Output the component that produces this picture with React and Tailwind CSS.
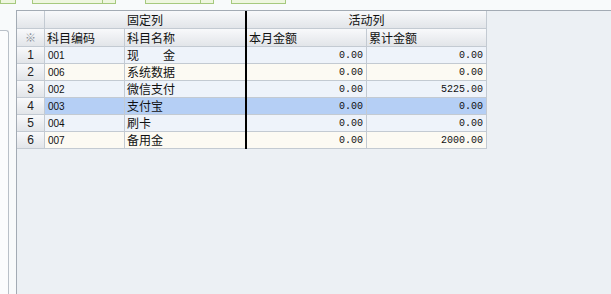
const rows = [
  { no: "1", code: "001", name: "现　　金", month: "0.00", total: "0.00" },
  { no: "2", code: "006", name: "系统数据", month: "0.00", total: "0.00" },
  { no: "3", code: "002", name: "微信支付", month: "0.00", total: "5225.00" },
  { no: "4", code: "003", name: "支付宝", month: "0.00", total: "0.00", selected: true },
  { no: "5", code: "004", name: "刷卡", month: "0.00", total: "0.00" },
  { no: "6", code: "007", name: "备用金", month: "0.00", total: "2000.00" },
];

const cjk = "font-['Noto_Sans_CJK_SC','Noto_Sans',sans-serif]";
const head = "bg-gradient-to-b from-[#f8f9fb] to-[#e2e5e9]";

function ToolButton({ w, split }) {
  return (
    <div className="flex h-[4px]">
      <div
        className="h-full border-b border-l border-r border-[#a6c97e] bg-[#eef6df]"
        style={{ width: w }}
      />
      {split && <div className="h-full w-[13px] border-b border-r border-[#a6c97e] bg-[#eef6df]" />}
    </div>
  );
}

function Row({ r }) {
  const bg = r.selected ? "bg-[#b5cff5]" : r.no % 2 ? "bg-[#eef3fa]" : "bg-[#fcfaf3]";
  return (
    <div className="flex h-[17px]">
      <div className={`w-[28px] shrink-0 border-b border-r border-[#c3cad2] ${head} flex items-center justify-center text-[12px] text-[#222] font-['Liberation_Sans',sans-serif]`}>
        {r.no}
      </div>
      <div className={`w-[80px] shrink-0 border-b border-r border-[#c3cad2] ${bg} flex items-center pl-[3px] text-[10px] text-[#111] font-['Liberation_Sans',sans-serif]`}>
        {r.code}
      </div>
      <div className={`w-[120px] shrink-0 border-b border-[#c3cad2] ${bg} flex items-center pl-[2px] text-[12px] text-[#111] ${cjk} leading-none`}>
        {r.name}
      </div>
      <div className="w-[2px] shrink-0 bg-black" />
      <div className={`w-[120px] shrink-0 border-b border-r border-[#c3cad2] ${bg} flex items-center justify-end pr-[3px] text-[10px] text-[#111] font-['Liberation_Mono',monospace]`}>
        {r.month}
      </div>
      <div className={`w-[120px] shrink-0 border-b border-r border-[#c3cad2] ${bg} flex items-center justify-end pr-[3px] text-[10px] text-[#111] font-['Liberation_Mono',monospace]`}>
        {r.total}
      </div>
    </div>
  );
}

export default function App() {
  return (
    <div className="flex h-[294px] w-[611px] flex-col overflow-hidden bg-[#f8fafb]">
      <div className="flex h-[10px] shrink-0">
        <div className="ml-[0px]"><ToolButton w={16} /></div>
        <div className="ml-[16px]"><ToolButton w={71} split /></div>
        <div className="ml-[29px]"><ToolButton w={56} split /></div>
        <div className="ml-[17px]"><ToolButton w={55} /></div>
      </div>

      <div className="flex flex-1">
        <div className="w-[16px] shrink-0 pt-[20px]">
          <div className="h-full w-[9px] rounded-tr-[3px] border-r border-t border-[#b9c0c8] bg-[#fbfcfd]" />
        </div>

        <div className="flex-1 border-l border-t border-[#a3abb4] bg-[#ecf0f4]">
          <div className={`flex h-[18px] ${cjk} text-[12px] text-[#111]`}>
            <div className={`w-[28px] shrink-0 border-b border-r border-[#c3cad2] ${head}`} />
            <div className={`w-[200px] shrink-0 border-b border-[#c3cad2] ${head} flex items-center justify-center leading-none`}>
              固定列
            </div>
            <div className="w-[2px] shrink-0 bg-black" />
            <div className={`w-[240px] shrink-0 border-b border-r border-[#c3cad2] ${head} flex items-center justify-center leading-none`}>
              活动列
            </div>
          </div>

          <div className={`flex h-[18px] ${cjk} text-[12px] text-[#111]`}>
            <div className={`w-[28px] shrink-0 border-b border-r border-[#c3cad2] ${head} flex items-center justify-center text-[11px] text-[#8a9098]`}>
              ※
            </div>
            <div className={`w-[80px] shrink-0 border-b border-r border-[#c3cad2] ${head} flex items-center pl-[2px] leading-none`}>
              科目编码
            </div>
            <div className={`w-[120px] shrink-0 border-b border-[#c3cad2] ${head} flex items-center pl-[2px] leading-none`}>
              科目名称
            </div>
            <div className="w-[2px] shrink-0 bg-black" />
            <div className={`w-[120px] shrink-0 border-b border-r border-[#c3cad2] ${head} flex items-center pl-[2px] leading-none`}>
              本月金额
            </div>
            <div className={`w-[120px] shrink-0 border-b border-r border-[#c3cad2] ${head} flex items-center pl-[2px] leading-none`}>
              累计金额
            </div>
          </div>

          {rows.map((r) => (
            <Row key={r.no} r={r} />
          ))}
        </div>
      </div>
    </div>
  );
}
